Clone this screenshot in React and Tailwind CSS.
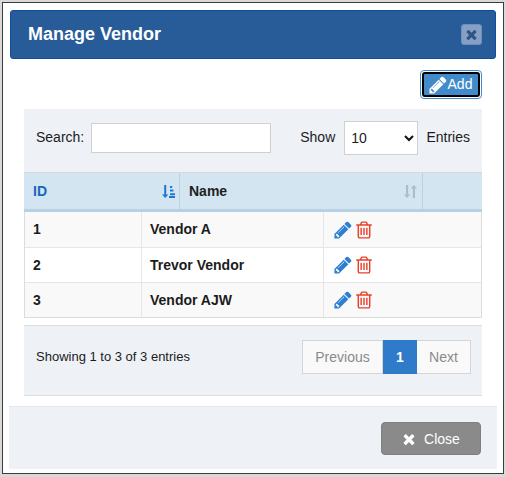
import React from "react";

const PENCIL = "M491 1536l91-91-235-235-91 91v107h128v128h107zm523-928q0-22-22-22-10 0-17 7l-542 542q-7 7-7 17 0 22 22 22 10 0 17-7l542-542q7-7 7-17zm-54-192l416 416-832 832h-416v-416zm683 96q0 53-37 90l-166 166-416-416 166-165q36-38 90-38 53 0 91 38l235 234q37 39 37 91z";
const TIMES = "M1490 1322q0 40-28 68l-136 136q-28 28-68 28t-68-28l-294-294-294 294q-28 28-68 28t-68-28l-136-136q-28-28-28-68t28-68l294-294-294-294q-28-28-28-68t28-68l136-136q28-28 68-28t68 28l294 294 294-294q28-28 68-28t68 28l136 136q28 28 28 68t-28 68l-294 294 294 294q28 28 28 68z";
const TRASH = "M704 736v576q0 14-9 23t-23 9h-64q-14 0-23-9t-9-23v-576q0-14 9-23t23-9h64q14 0 23 9t9 23zm256 0v576q0 14-9 23t-23 9h-64q-14 0-23-9t-9-23v-576q0-14 9-23t23-9h64q14 0 23 9t9 23zm256 0v576q0 14-9 23t-23 9h-64q-14 0-23-9t-9-23v-576q0-14 9-23t23-9h64q14 0 23 9t9 23zm128 724v-948h-896v948q0 22 7 40.5t14.5 27 10.5 8.5h832q3 0 10.5-8.5t14.5-27 7-40.5zm-672-1076h448l-48-117q-7-9-17-11h-317q-10 2-17 11zm928 32v64q0 14-9 23t-23 9h-96v948q0 83-47 143.5t-113 60.5h-832q-66 0-113-58.5t-47-141.5v-952h-96q-14 0-23-9t-9-23v-64q0-14 9-23t23-9h309l70-167q15-37 54-63t79-26h320q40 0 79 26t54 63l70 167h309q14 0 23 9t9 23z";

function Fa({ d, size, className }) {
  return (
    <svg width={size} height={size} viewBox="0 0 1792 1792" fill="currentColor" className={className}>
      <path d={d} />
    </svg>
  );
}

function SortActive() {
  return (
    <svg width="13" height="13" viewBox="0 0 13 13" fill="currentColor" className="text-[#1f78d1]">
      <path d="M2.2 0h2v9.4H6.4L3.2 13 0 9.4h2.2z" />
      <path d="M8 1h2.2v2H8zM8 4.6h3.4v2H8zM8 8.2h5v2H8zM7 11h6v2H7z" />
    </svg>
  );
}

function SortIdle() {
  return (
    <svg width="13" height="13" viewBox="0 0 13 13" fill="currentColor" className="text-[#aebdc6]">
      <path d="M2 0h2.2v9.4h2L3.1 13 0 9.4h2z" />
      <path d="M8.8 13H11V3.6h2L9.9 0 6.8 3.6h2z" />
    </svg>
  );
}

function Row({ id, name, odd, h, last }) {
  return (
    <div className={`grid grid-cols-[117px_182px_1fr] ${h} ${odd ? "bg-[#f9f9f9]" : "bg-white"} ${last ? "" : "border-b border-[#e6e6e6]"}`}>
      <div className="flex items-center pl-2 font-bold border-r border-[#e6e6e6]">{id}</div>
      <div className="flex items-center pl-2 font-bold border-r border-[#e6e6e6]">{name}</div>
      <div className="flex items-center pl-[9px] gap-px">
        <Fa d={PENCIL} size={20} className="text-[#2a7fd0]" />
        <Fa d={TRASH} size={20} className="text-[#e8412a]" />
      </div>
    </div>
  );
}

export default function App() {
  return (
    <div className="w-[506px] h-[477px] bg-[#d9d9d9] pt-[2px] pl-[2px] pr-[2px] pb-[3px] font-['Liberation_Sans',Arial,sans-serif] text-[14px] text-[#1c1c1c]">
      <div className="h-full border border-[#3c3c3c] bg-white px-[6px] pt-[7px] pb-[4px] flex flex-col">
        <div className="h-[49px] shrink-0 mx-px bg-[#285c98] border border-[#0d4d9c] rounded-[3px] flex items-center justify-between pl-[17px] pr-[13px]">
          <span className="text-white text-[18px] font-bold">Manage Vendor</span>
          <button className="w-[21px] h-[21px] rounded-[3px] border border-[#6f90bd] bg-[#86a0c5] flex items-center justify-center text-[#2f5482]">
            <Fa d={TIMES} size={15} />
          </button>
        </div>

        <div className="px-[15px]">
          <div className="flex justify-end mt-[11px] mb-[10px]">
            <button className="w-[62px] h-[29px] rounded-[4px] border border-[#3f8ad0] p-px bg-white">
              <span className="w-full h-full rounded-[3px] border-2 border-black bg-[#428bca] text-white flex items-center justify-center text-[14px]">
                <Fa d={PENCIL} size={20} className="-ml-[2px]" />
                Add
              </span>
            </button>
          </div>

          <div className="bg-[#eef1f6] h-[63px] flex items-start pt-[12px] pl-[12px] pr-[12px]">
            <span className="mt-[6px]">Search:</span>
            <input className="ml-[7px] mt-[2px] w-[180px] h-[30px] bg-white border border-[#d0d0d0] outline-none" />
            <span className="ml-[29px] mt-[6px]">Show</span>
            <div className="ml-[9px] w-[75px] h-[34px] bg-white border border-[#d0d0d0] flex items-center justify-between pl-[6px] pr-[3px]">
              <span className="pt-px">10</span>
              <svg width="10" height="7" viewBox="0 0 10 7" fill="none" stroke="#111" strokeWidth="2"><path d="M1 1l4 4 4-4" /></svg>
            </div>
            <span className="ml-[8px] mt-[6px]">Entries</span>
          </div>

          <div className="border-t border-t-[#d8d8d8] bg-[#d2e5f1] h-[40px] grid grid-cols-[156px_243px_1fr] border-b-[3px] border-b-[#b6d1e4] font-bold">
            <div className="flex items-center justify-between pl-[9px] pr-[4px] border-r border-[#b9d2e4] text-[#1a66c0]">
              <span>ID</span>
              <SortActive />
            </div>
            <div className="flex items-center justify-between pl-[9px] pr-[5px] border-r border-[#b9d2e4] text-[#1f1f1f]">
              <span>Name</span>
              <SortIdle />
            </div>
            <div />
          </div>

          <div className="border-x border-b border-[#dcdcdc]">
            <Row id="1" name="Vendor A" odd h="h-[36px]" />
            <Row id="2" name="Trevor Vendor" h="h-[35px]" />
            <Row id="3" name="Vendor AJW" odd h="h-[34px]" last />
          </div>

          <div className="mt-[7px] h-[71px] bg-[#eef1f6] border-y border-[#dedede] flex items-start justify-between pt-[14px] pl-[12px] pr-[11px]">
            <span className="text-[13px] mt-[7px]">Showing 1 to 3 of 3 entries</span>
            <div className="flex h-[34px] text-[14px]">
              <span className="w-[81px] border border-[#d5d5d5] bg-[#f9f9f9] text-[#8a8a8a] flex items-center justify-center">Previous</span>
              <span className="w-[34px] bg-[#2f7ac9] text-white font-bold flex items-center justify-center">1</span>
              <span className="w-[54px] border border-l-0 border-[#d5d5d5] bg-[#f9f9f9] text-[#8a8a8a] flex items-center justify-center">Next</span>
            </div>
          </div>
        </div>

        <div className="mt-[10px] flex-1 bg-[#eef1f6] border-t border-[#e4e7ec] flex items-start justify-end pt-[15px] pr-[16px]">
          <button className="w-[100px] h-[33px] rounded-[4px] bg-[#8a8a8a] border border-[#7f7f7f] text-white flex items-center justify-center gap-[7px] pt-px">
            <Fa d={TIMES} size={16} className="-ml-px" />
            Close
          </button>
        </div>
      </div>
    </div>
  );
}
